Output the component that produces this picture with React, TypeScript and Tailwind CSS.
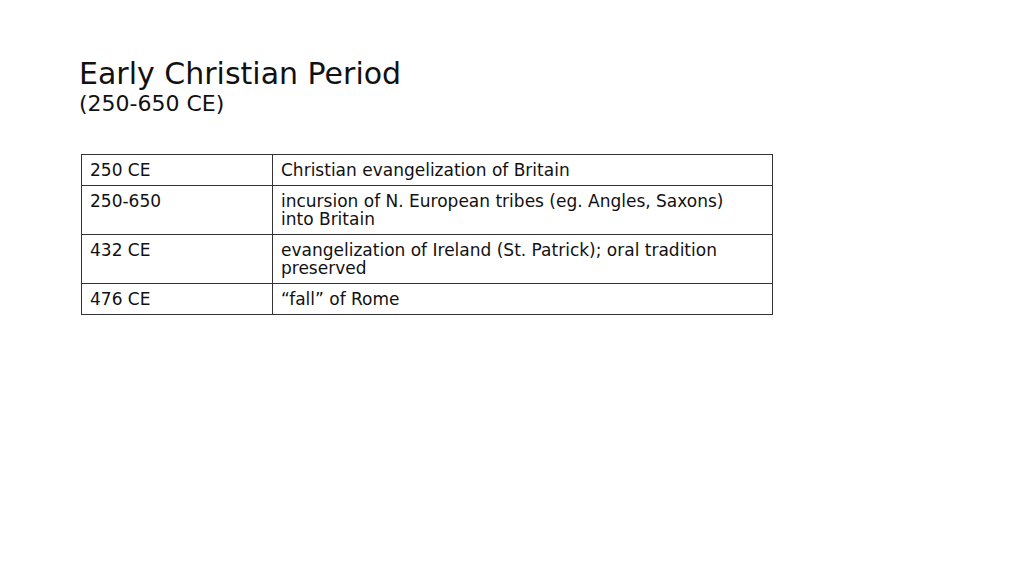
import React from "react";

const rows: [string, string][] = [
  ["250 CE", "Christian evangelization of Britain"],
  ["250-650", "incursion of N. European tribes (eg. Angles, Saxons) into Britain"],
  ["432 CE", "evangelization of Ireland (St. Patrick); oral tradition preserved"],
  ["476 CE", "\u201cfall\u201d of Rome"],
];

export default function App() {
  return (
    <div
      className="w-[1024px] h-[576px] bg-white text-[#111] overflow-hidden"
      style={{ fontFamily: '"DejaVu Sans", Verdana, sans-serif' }}
    >
      <div className="pl-[79px] pt-[56px]">
        <div className="text-[30px] leading-[35px]">Early Christian Period</div>
        <div className="text-[22px] leading-[26px]">(250-650 CE)</div>
      </div>
      <table className="ml-[81px] mt-[37px] w-[692px] border-collapse text-[17px] leading-[18px]">
        <tbody>
          {rows.map(([a, b], i) => (
            <tr key={i}>
              <td className="w-[191px] border border-[#333] pl-[8px] pr-[8px] pt-[6px] pb-[6px] align-top">{a}</td>
              <td className="border border-[#333] pl-[8px] pr-[24px] pt-[6px] pb-[6px] align-top">{b}</td>
            </tr>
          ))}
        </tbody>
      </table>
    </div>
  );
}
